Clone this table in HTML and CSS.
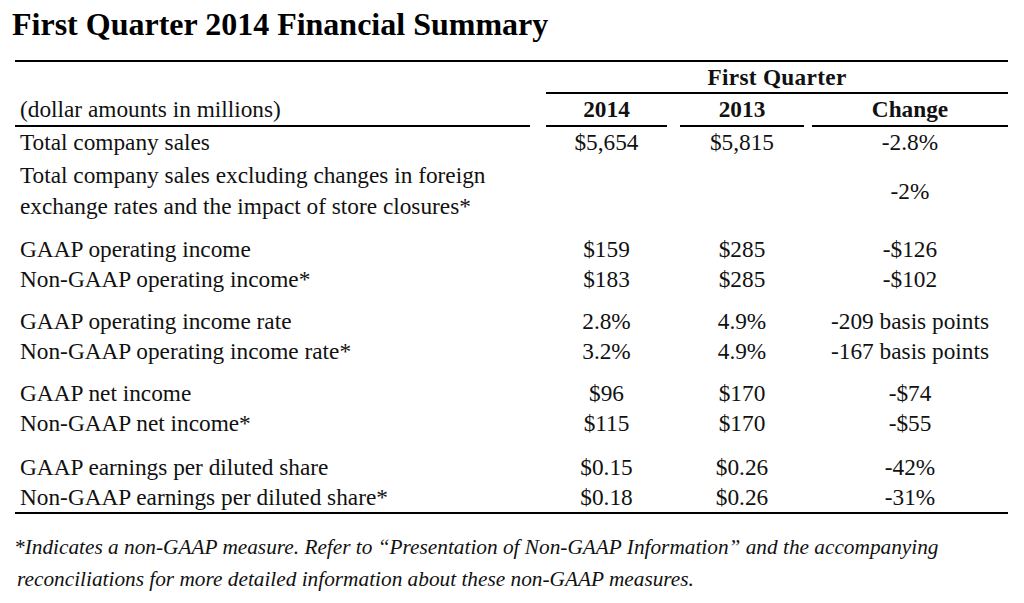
FILE: index.html
```html
<!DOCTYPE html>
<html>
<head>
<meta charset="utf-8">
<link rel="stylesheet" href="styles.css">
</head>
<body>
<h1 class="title">First Quarter 2014 Financial Summary</h1>
<div class="table">
  <div class="period">First Quarter</div>

  <div class="lab hd">(dollar amounts in millions)</div>
  <div class="c1 hd bold">2014</div>
  <div class="c2 hd bold">2013</div>
  <div class="c3 hd bold">Change</div>

  <div class="lab">Total company sales</div>
  <div class="c1">$5,654</div>
  <div class="c2">$5,815</div>
  <div class="c3">-2.8%</div>

  <div class="lab two">Total company sales excluding changes in foreign<br>exchange rates and the impact of store closures*</div>
  <div class="c1 two"></div>
  <div class="c2 two"></div>
  <div class="c3 two mid">-2%</div>

  <div class="lab gs">GAAP operating income</div>
  <div class="c1 gs">$159</div>
  <div class="c2 gs">$285</div>
  <div class="c3 gs">-$126</div>

  <div class="lab">Non-GAAP operating income*</div>
  <div class="c1">$183</div>
  <div class="c2">$285</div>
  <div class="c3">-$102</div>

  <div class="lab gs">GAAP operating income rate</div>
  <div class="c1 gs">2.8%</div>
  <div class="c2 gs">4.9%</div>
  <div class="c3 gs">-209 basis points</div>

  <div class="lab">Non-GAAP operating income rate*</div>
  <div class="c1">3.2%</div>
  <div class="c2">4.9%</div>
  <div class="c3">-167 basis points</div>

  <div class="lab gs">GAAP net income</div>
  <div class="c1 gs">$96</div>
  <div class="c2 gs">$170</div>
  <div class="c3 gs">-$74</div>

  <div class="lab">Non-GAAP net income*</div>
  <div class="c1">$115</div>
  <div class="c2">$170</div>
  <div class="c3">-$55</div>

  <div class="lab gl">GAAP earnings per diluted share</div>
  <div class="c1 gl">$0.15</div>
  <div class="c2 gl">$0.26</div>
  <div class="c3 gl">-42%</div>

  <div class="lab">Non-GAAP earnings per diluted share*</div>
  <div class="c1">$0.18</div>
  <div class="c2">$0.26</div>
  <div class="c3">-31%</div>
</div>
<p class="note">*Indicates a non-GAAP measure. Refer to “Presentation of Non-GAAP Information” and the accompanying<br><span class="cont">reconciliations for more detailed information about these non-GAAP measures.</span></p>
</body>
</html>
```

FILE: styles.css
```css
html, body {
  margin: 0;
  padding: 0;
  background: #fff;
}
body {
  font-family: "Liberation Serif", "Times New Roman", serif;
  color: #111;
  width: 1024px;
  height: 603px;
  overflow: hidden;
}
.title {
  margin: 8px 0 0 12px;
  font-size: 32px;
  line-height: 32px;
  font-weight: bold;
  color: #000;
}
.table {
  margin: 20px 0 0 15px;
  width: 993px;
  border-top: 2px solid #000;
  border-bottom: 2px solid #000;
  display: grid;
  grid-template-columns: 515px 16px 121px 13px 124px 8px 196px;
  font-size: 23.3px;
  line-height: 30px;
}
.period {
  grid-column: 3 / 8;
  text-align: center;
  font-weight: bold;
  border-bottom: 2px solid #000;
  padding-top: 1px;
  line-height: 29px;
  letter-spacing: 0.3px;
}
.lab { grid-column: 1; padding-left: 5px; }
.c1 { grid-column: 3; text-align: center; }
.c2 { grid-column: 5; text-align: center; }
.c3 { grid-column: 7; text-align: center; }
.hd {
  border-bottom: 2px solid #000;
  line-height: 31px;
}
.bold { font-weight: bold; }
.two {
  margin-top: 3px;
  line-height: 31px;
}
.mid {
  display: flex;
  align-items: center;
  justify-content: center;
}
.gs { margin-top: 12px; }
.gl { margin-top: 14px; }
.note {
  margin: 17px 0 0 14px;
  font-style: italic;
  font-size: 21.3px;
  line-height: 32px;
}
.cont { padding-left: 3px; }
```
